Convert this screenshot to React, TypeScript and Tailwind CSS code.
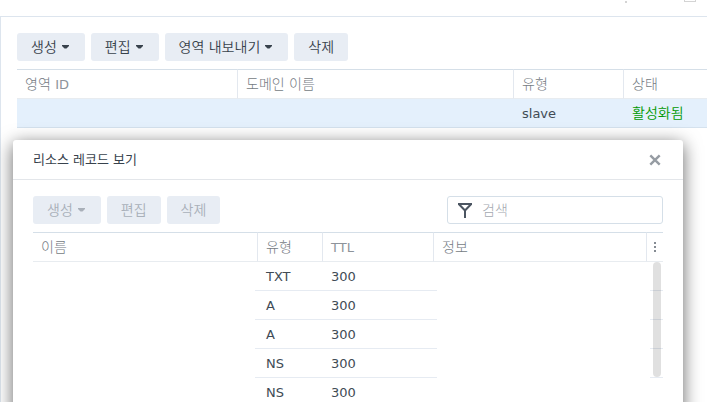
// DnsZonePanel: zone list with the resource record dialog on top
import React, { useState } from 'react';
import clsx from 'clsx';

interface Zone {
    id: string;
    domain: string;
    type: string;
    status: string;
}

interface ResourceRecord {
    name: string;
    type: string;
    ttl: number;
    info: string;
}

const ZONES: Zone[] = [{ id: '', domain: '', type: 'slave', status: '활성화됨' }];

const RECORDS: ResourceRecord[] = [
    { name: '', type: 'TXT', ttl: 300, info: '' },
    { name: '', type: 'A', ttl: 300, info: '' },
    { name: '', type: 'A', ttl: 300, info: '' },
    { name: '', type: 'NS', ttl: 300, info: '' },
    { name: '', type: 'NS', ttl: 300, info: '' },
];

const ToolbarButton: React.FC<{ label: string; menu?: boolean; disabled?: boolean }> = ({ label, menu, disabled }) => (
    <button
        type="button"
        disabled={disabled}
        className={clsx(
            'flex h-7 items-center gap-1 rounded-[3px] bg-[#e8edf4] px-3.5 font-[350] whitespace-nowrap',
            disabled ? 'text-[#a9b0b9]' : 'text-[#38424c]',
        )}
    >
        {label}
        {menu && (
            <svg width="10" height="4" viewBox="0 0 10 4" fill="currentColor" aria-hidden="true">
                <path d="M1 0h7v1L5.5 3.5h-2L1 1z" />
            </svg>
        )}
    </button>
);

const HeadCell: React.FC<{ children?: React.ReactNode; last?: boolean }> = ({ children, last }) => (
    <th
        className={clsx(
            'h-[30px] border-t border-b border-t-[#d5dfe8] border-b-[#e8ecf0] px-2 text-left font-light text-[#757b83]',
            !last && 'border-r border-r-[#e3e8ef]',
        )}
    >
        {children}
    </th>
);

const ZoneTable: React.FC = () => (
    <table className="w-full table-fixed border-separate border-spacing-0">
        <colgroup>
            <col className="w-[221px]" />
            <col />
            <col className="w-[110px]" />
            <col className="w-[83px]" />
        </colgroup>
        <thead>
            <tr>
                <HeadCell>영역 <span className="text-[13px] font-normal text-[#8d939a]">ID</span></HeadCell>
                <HeadCell>도메인 이름</HeadCell>
                <HeadCell>유형</HeadCell>
                <HeadCell last>상태</HeadCell>
            </tr>
        </thead>
        <tbody>
            {ZONES.map((zone, i) => (
                <tr key={i} className="bg-[#e4f0fc] text-[13px] text-[#414b55]">
                    <td className="h-[29px] border-b border-[#d5e2ee] px-2">{zone.id}</td>
                    <td className="border-b border-[#d5e2ee] px-2">{zone.domain}</td>
                    <td className="border-b border-[#d5e2ee] px-2 pt-0.5">{zone.type}</td>
                    <td className="border-b border-[#d5e2ee] px-2 text-sm font-[350] text-[#009900]">{zone.status}</td>
                </tr>
            ))}
        </tbody>
    </table>
);

const RecordTable: React.FC = () => (
    <div className="relative">
        <table className="w-full table-fixed border-separate border-spacing-0">
            <colgroup>
                <col className="w-[225px]" />
                <col className="w-[65px]" />
                <col className="w-[111px]" />
                <col />
                <col className="w-4" />
            </colgroup>
            <thead>
                <tr>
                    <HeadCell>이름</HeadCell>
                    <HeadCell>유형</HeadCell>
                    <HeadCell><span className="text-[13px] font-normal text-[#8d939a]">TTL</span></HeadCell>
                    <HeadCell>정보</HeadCell>
                    <th className="border-t border-b border-t-[#d5dfe8] border-b-[#e8ecf0] p-0">
                        <button type="button" aria-label="열" className="flex h-7 w-4 items-center justify-center text-[#858b93]">
                            <svg width="2" height="10" viewBox="0 0 2 10" fill="currentColor" aria-hidden="true">
                                <path d="M0 0h2v2H0zM0 4h2v2H0zM0 8h2v2H0z" />
                            </svg>
                        </button>
                    </th>
                </tr>
            </thead>
            <tbody>
                {RECORDS.map((record, i) => (
                    <tr key={i} className="text-[13px] text-[#414b55]">
                        {/* blank cells cover the row line */}
                        <td className="relative h-[29px] border-b border-[#e6ebf2] px-2">
                            <span className="absolute top-0 right-[3px] -bottom-px left-0 bg-white">{record.name}</span>
                        </td>
                        <td className="border-b border-[#e6ebf2] px-2 pt-0.5">{record.type}</td>
                        <td className="border-b border-[#e6ebf2] px-2 pt-0.5">{record.ttl}</td>
                        <td className="relative border-b border-[#e6ebf2] px-2">
                            <span className="absolute top-0 -right-[3px] -bottom-px left-[3px] bg-white">{record.info}</span>
                        </td>
                        <td className="border-b border-[#e6ebf2]" />
                    </tr>
                ))}
            </tbody>
        </table>
        {/* scroll thumb */}
        <div className="absolute top-[30px] right-[2px] h-[115px] w-2 rounded-full bg-black/12" />
    </div>
);

const RecordDialog: React.FC = () => {
    const [query, setQuery] = useState('');

    return (
        <section
            role="dialog"
            aria-labelledby="record-title"
            className="absolute top-[140px] right-6 left-[13px] rounded-[3px] bg-white pb-5 shadow-[0_4px_18px_rgba(0,0,0,0.6)]"
        >
            <header className="flex h-10 items-center justify-between border-b border-[#e3e6ea] px-5">
                <h2 id="record-title" className="text-[13px] font-normal text-[#38424c]">리소스 레코드 보기</h2>
                <button type="button" aria-label="닫기" className="flex size-4 items-center justify-center text-[#969ca3]">
                    <svg width="12" height="12" viewBox="0 0 12 12" fill="none" stroke="currentColor" strokeWidth="2.4" aria-hidden="true">
                        <path d="M1.3 1.3l9.4 9.4M10.7 1.3l-9.4 9.4" />
                    </svg>
                </button>
            </header>
            <div className="px-5 pt-4">
                <div className="mb-2 flex items-center gap-1.5">
                    <ToolbarButton label="생성" menu disabled />
                    <ToolbarButton label="편집" disabled />
                    <ToolbarButton label="삭제" disabled />
                    <label className="ml-auto flex h-7 w-[216px] items-center gap-2.5 rounded-[3px] border border-[#d5dfe8] px-2.5">
                        <svg width="14" height="15" viewBox="0 0 14 15" fill="none" stroke="#4b5561" strokeWidth="2" className="shrink-0" aria-hidden="true">
                            <path d="M0 1h14M1 1.2l6 6.3 6-6.3M7 7v8" />
                        </svg>
                        <input
                            type="text"
                            aria-label="검색"
                            placeholder="검색"
                            value={query}
                            onChange={e => setQuery(e.target.value)}
                            className="w-full min-w-0 font-light text-[#414b55] outline-none placeholder:text-[#a4a9b0]"
                        />
                    </label>
                </div>
                <RecordTable />
            </div>
        </section>
    );
};

export default function App() {
    return (
        <div className="relative flex h-screen flex-col overflow-hidden bg-white font-['DejaVu_Sans','Noto_Sans_CJK_KR',sans-serif] text-sm leading-5">
            <header className="flex h-4 shrink-0 items-start justify-end pr-2.5">
                <svg width="72" height="3" viewBox="0 0 72 3" fill="#d4d4d4" aria-hidden="true">
                    <path d="M0 1h2v2H0zM59 0h1v1h10V0h1v2H59z" />
                </svg>
            </header>
            <main className="flex flex-1 flex-col border-t border-l border-[#dde5ee] pt-4 pl-4">
                <div className="mb-2 flex gap-1.5">
                    <ToolbarButton label="생성" menu />
                    <ToolbarButton label="편집" menu />
                    <ToolbarButton label="영역 내보내기" menu />
                    <ToolbarButton label="삭제" />
                </div>
                <ZoneTable />
            </main>
            <RecordDialog />
        </div>
    );
}
